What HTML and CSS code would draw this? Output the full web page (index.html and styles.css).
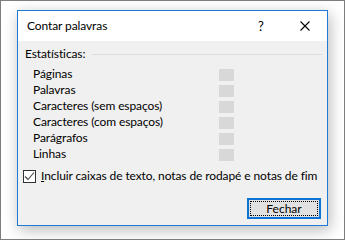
FILE: index.html
```html
<!DOCTYPE html>
<html lang="pt">
<head>
  <meta charset="UTF-8">
  <title>Contar palavras</title>
  <link rel="stylesheet" href="styles.css">
</head>
<body>
  <div class="frame">
    <div class="dialog">
      <div class="titlebar">
        <span class="title">Contar palavras</span>
        <span class="help">?</span>
        <svg class="close" width="10" height="10" viewBox="0 0 10 10">
          <path d="M0.5 0.5 L9.5 9.5 M9.5 0.5 L0.5 9.5" stroke="#000" stroke-width="1.1" fill="none"/>
        </svg>
      </div>
      <div class="content">
        <div class="group-head">
          <span>Estatísticas:</span>
          <div class="rule"></div>
        </div>
        <div class="stats">
          <span>Páginas</span><span class="val"></span>
          <span>Palavras</span><span class="val"></span>
          <span>Caracteres (sem espaços)</span><span class="val"></span>
          <span>Caracteres (com espaços)</span><span class="val"></span>
          <span>Parágrafos</span><span class="val"></span>
          <span>Linhas</span><span class="val"></span>
        </div>
        <label class="check">
          <span class="box">
            <svg width="11" height="11" viewBox="0 0 11 11">
              <path d="M1 5.5 L4 8.5 L10 1.5" stroke="#444" stroke-width="1.1" fill="none"/>
            </svg>
          </span>
          <span><u>I</u>ncluir caixas de texto, notas de rodapé e notas de fim</span>
        </label>
        <div class="actions">
          <button class="btn"><span>Fechar</span></button>
        </div>
      </div>
    </div>
  </div>
</body>
</html>
```

FILE: styles.css
```css
* {
  margin: 0;
  padding: 0;
  box-sizing: border-box;
}

body {
  font-family: 'Lato', 'Noto Sans', sans-serif;
  font-size: 12px;
  letter-spacing: -0.1px;
  color: #000;
  background: #fff;
}

.frame {
  width: 345px;
  height: 240px;
  border: 1px solid #7d7d7d;
  background: #fff;
  padding: 9px 0 0 16px;
  overflow: hidden;
}

.dialog {
  width: 311px;
  height: 216px;
  border: 1px solid #1c7bd4;
  background: #f0f0f0;
  display: flex;
  flex-direction: column;
  box-shadow: 2px 4px 14px rgba(0, 0, 0, 0.28);
}

.titlebar {
  height: 30px;
  background: #fff;
  display: flex;
  align-items: center;
  padding-left: 9px;
  line-height: 16px;
}

.title {
  flex: 1;
}

.help {
  width: 8px;
  margin-right: 34px;
  font-size: 13px;
}

.close {
  margin-right: 17px;
}

.content {
  flex: 1;
  display: flex;
  flex-direction: column;
  padding: 5px 5px 6px 5px;
  line-height: 16px;
}

.group-head {
  display: flex;
  align-items: center;
  padding-left: 2px;
}

.rule {
  flex: 1;
  height: 1px;
  background: #dcdcdc;
  margin-left: 7px;
}

.stats {
  display: grid;
  grid-template-columns: 186px 15px;
  grid-auto-rows: 16px;
  margin: 4px 0 0 10px;
}

.val {
  width: 15px;
  height: 12px;
  margin-top: 3px;
  background: #d8d8d8;
}

.check {
  display: flex;
  align-items: center;
  margin-top: 6px;
  height: 16px;
}

.box {
  width: 13px;
  height: 13px;
  border: 1px solid #333;
  background: #fff;
  display: flex;
  align-items: center;
  justify-content: center;
  margin-right: 5px;
}

.actions {
  margin-top: auto;
  display: flex;
  justify-content: flex-end;
  padding-right: 1px;
}

.btn {
  width: 74px;
  height: 21px;
  border: 2px solid #0a74d6;
  background: #e1e1e1;
  padding: 1px;
  font: inherit;
  display: flex;
}

.btn span {
  flex: 1;
  border: 1px dotted #000;
  display: flex;
  align-items: center;
  justify-content: center;
  line-height: 13px;
}
```
